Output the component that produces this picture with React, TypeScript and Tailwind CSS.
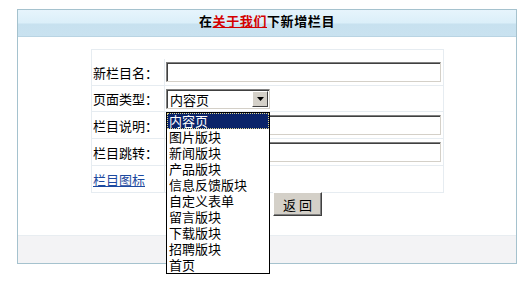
const types = [
  "内容页",
  "图片版块",
  "新闻版块",
  "产品版块",
  "信息反馈版块",
  "自定义表单",
  "留言版块",
  "下载版块",
  "招聘版块",
  "首页",
];

const font = "font-['SimSun','Noto_Sans_CJK_SC',sans-serif]";

function TextInput() {
  return (
    <div className="w-[275px] h-[20px] bg-white border border-t-[#808080] border-l-[#808080] border-b-[#d4d0c8] border-r-[#d4d0c8] shadow-[inset_1px_1px_0_#404040]" />
  );
}

function Row({
  label,
  height,
  children,
}: {
  label: React.ReactNode;
  height: string;
  children?: React.ReactNode;
}) {
  return (
    <div className={`flex border-b border-[#e6ecf1] ${height}`}>
      <div className="w-[73px] pl-[1px] border-r border-[#e6ecf1] flex items-center text-[13px] leading-none">
        {label}
      </div>
      <div className="flex-1 pl-[1px] flex items-center">{children}</div>
    </div>
  );
}

function TypeSelect() {
  return (
    <div className="relative">
      <div className="w-[104px] h-[20px] bg-white flex border border-t-[#808080] border-l-[#808080] border-b-[#d4d0c8] border-r-[#d4d0c8] shadow-[inset_1px_1px_0_#404040]">
        <div className="flex-1 pl-[3px] pt-[1px] flex items-center text-[13px] leading-none">
          内容页
        </div>
        <div className="w-[16px] h-[16px] mt-[1px] mr-[1px] bg-[#d4d0c8] border border-t-white border-l-white border-b-[#404040] border-r-[#404040] flex items-center justify-center">
          <svg width="7" height="4" viewBox="0 0 7 4">
            <path d="M0 0h7L3.5 4z" fill="#000" />
          </svg>
        </div>
      </div>
      {/* open dropdown list */}
      <div className="absolute left-0 top-[23px] z-10 w-[104px] bg-white border border-black">
        {types.map((t, i) => (
          <div
            key={t}
            className={`h-[16px] pl-[2px] text-[13px] leading-[16px] whitespace-nowrap ${
              i === 0
                ? "bg-[#0a246a] text-white outline-1 outline-dotted outline-[#e0d890] -outline-offset-1"
                : "text-black"
            }`}
          >
            {t}
          </div>
        ))}
      </div>
    </div>
  );
}

export default function App() {
  return (
    <div className={`w-[524px] h-[286px] bg-white pt-[9px] pl-[17px] ${font}`}>
      <div className="w-[500px] h-[255px] border border-[#a5c2ce] flex flex-col">
        {/* header */}
        <div className="h-[27px] border-b border-[#b9d4e3] bg-[linear-gradient(#e6f4fc_0,#dbeff9_13px,#c7e1ef_14px,#c9e2f0_100%)] flex justify-center pt-[3px]">
          <h1 className="text-[13px] leading-[15px] font-bold tracking-[0.6px] text-black">
            在<span className="text-[#d40000] underline">关于我们</span>下新增栏目
          </h1>
        </div>

        {/* form */}
        <div className="flex-1 flex flex-col pt-[12px]">
          <div className="ml-[73px] w-[353px] border border-b-0 border-[#e6ecf1]">
            <Row label="新栏目名：" height="h-[36px] pt-[9px]">
              <TextInput />
            </Row>
            <Row label="页面类型：" height="h-[26px]">
              <TypeSelect />
            </Row>
            <Row label="栏目说明：" height="h-[27px]">
              <TextInput />
            </Row>
            <Row label="栏目跳转：" height="h-[27px]">
              <TextInput />
            </Row>
            <Row
              label={<a className="text-[#1d4aa0] underline">栏目图标</a>}
              height="h-[27px]"
            />
          </div>
          <div className="flex pl-[255px] -mt-[1px]">
            <button className="w-[49px] h-[24px] bg-[#d4d0c8] text-[13px] leading-none text-black border border-t-white border-l-white border-b-[#404040] border-r-[#404040] shadow-[inset_-1px_-1px_0_#808080]">
              返 回
            </button>
          </div>
        </div>

        {/* footer band */}
        <div className="h-[28px] border-t border-[#e8edf1] bg-[#f3f3f5]" />
      </div>
    </div>
  );
}
